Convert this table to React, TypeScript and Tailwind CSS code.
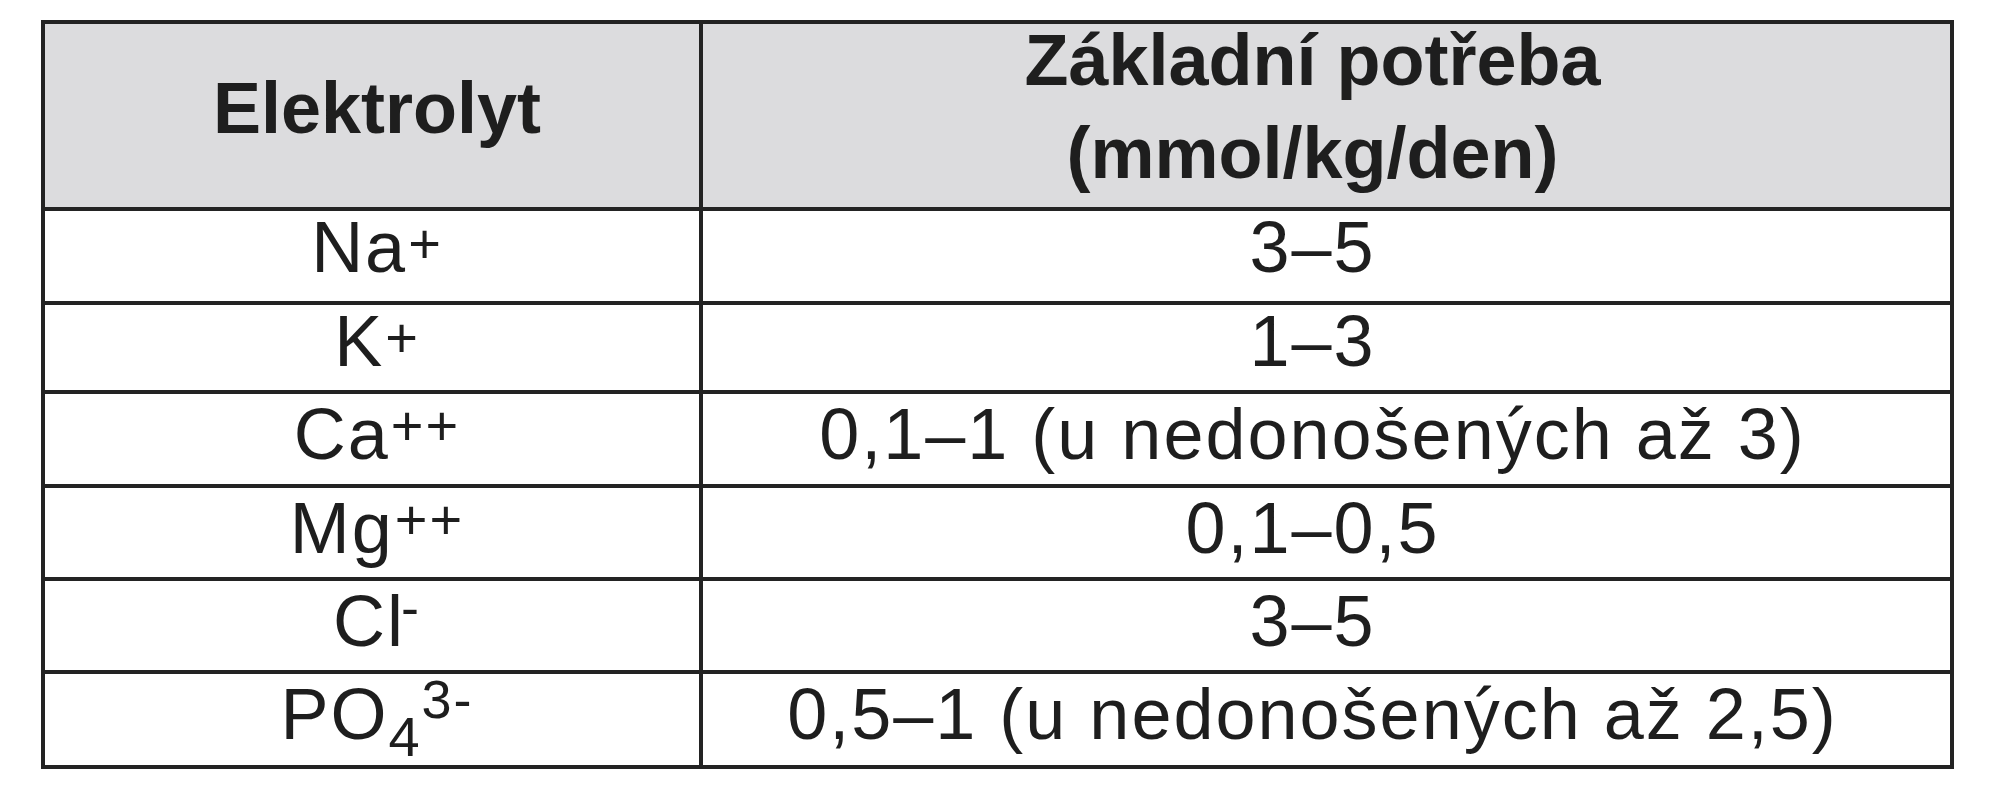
import type { ReactNode } from "react";

type Row = {
  el: ReactNode;
  val: string;
  h: string;
  pt: string;
};

function Sup({ children, cls }: { children: ReactNode; cls: string }) {
  return <span className={"relative leading-none " + cls}>{children}</span>;
}

const rows: Row[] = [
  { el: <>Na<Sup cls="text-[56px] top-[-9px] ml-[1px]">+</Sup></>, val: "3–5", h: "h-[94px]", pt: "pt-0" },
  { el: <>K<Sup cls="text-[56px] top-[-9px] ml-[1px]">+</Sup></>, val: "1–3", h: "h-[89px]", pt: "pt-0" },
  { el: <>Ca<Sup cls="text-[56px] top-[-14px] ml-[1px]">++</Sup></>, val: "0,1–1 (u nedonošených až 3)", h: "h-[94px]", pt: "pt-[4px]" },
  { el: <>Mg<Sup cls="text-[56px] top-[-14px] ml-[1px]">++</Sup></>, val: "0,1–0,5", h: "h-[93px]", pt: "pt-[4px]" },
  { el: <>Cl<Sup cls="text-[54px] top-[-20px] -ml-[4px]">-</Sup></>, val: "3–5", h: "h-[93px]", pt: "pt-[4px]" },
  {
    el: (
      <>
        PO<Sup cls="text-[56px] top-[17px]">4</Sup>
        <Sup cls="text-[54px] top-[-21px]">3-</Sup>
      </>
    ),
    val: "0,5–1 (u nedonošených až 2,5)",
    h: "h-[91px]",
    pt: "pt-[4px]",
  },
];

export default function App() {
  return (
    <div className="min-h-[800px] w-[1994px] bg-white pt-[20px] pl-[41px] font-['Liberation_Sans',Arial,sans-serif] text-[#1e1e1e]">
      <div className="w-[1913px] border-[4px] border-[#232323]">
        <div className="grid grid-cols-[658px_1fr]">
          <div className="h-[187px] border-r-[4px] border-b-[4px] border-[#232323] bg-[#dcdcde] pl-[10px] pt-[48px] text-center text-[72px] font-bold leading-none">
            Elektrolyt
          </div>
          <div className="h-[187px] border-b-[4px] border-[#232323] bg-[#dcdcde] pr-[28px] pt-0 text-center text-[72px] font-bold leading-none">
            <div>Základní potřeba</div>
            <div className="mt-[21px]">(mmol/kg/den)</div>
          </div>
          {rows.map((r, i) => {
            const last = i === rows.length - 1;
            return (
              <div key={i} className="contents">
                <div
                  className={
                    r.h + " " + r.pt + " border-r-[4px] border-[#232323] pl-[10px] text-center text-[72px] leading-none tracking-[2px] whitespace-nowrap " + (last ? "" : "border-b-[4px]")
                  }
                >
                  {r.el}
                </div>
                <div
                  className={
                    r.h + " " + r.pt + " border-[#232323] pr-[28px] text-center text-[72px] leading-none tracking-[2px] whitespace-nowrap " + (last ? "" : "border-b-[4px]")
                  }
                >
                  {r.val}
                </div>
              </div>
            );
          })}
        </div>
      </div>
    </div>
  );
}
